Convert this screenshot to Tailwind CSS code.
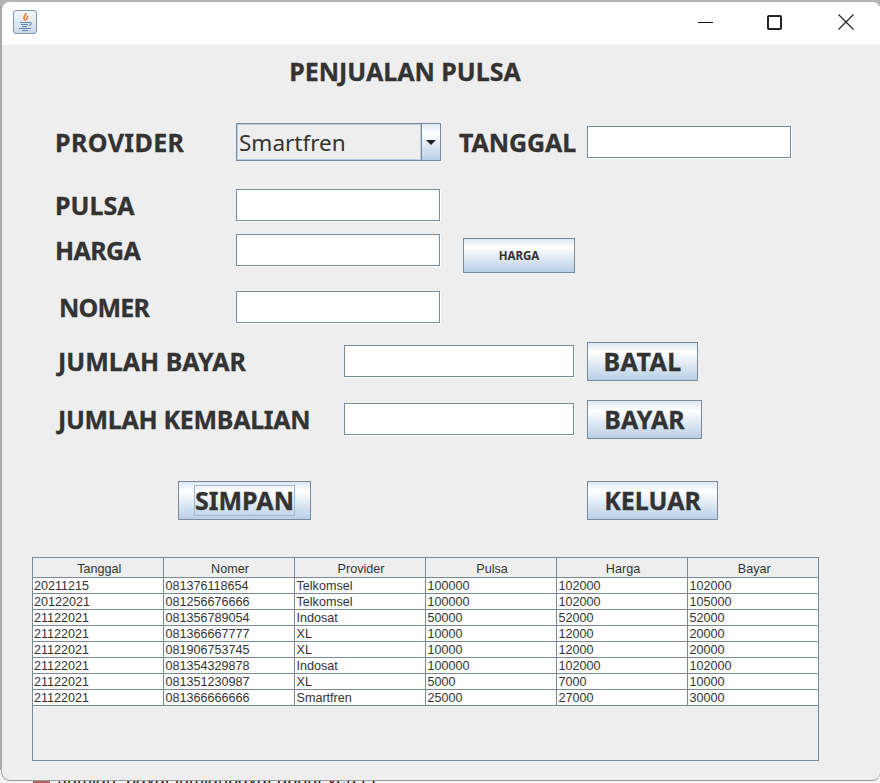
<!DOCTYPE html>
<html>
<head>
<meta charset="utf-8">
<script src="https://cdn.jsdelivr.net/npm/@tailwindcss/browser@4"></script>
</head>
<body class="w-[880px] h-[783px] overflow-hidden bg-[#f3f3f3] relative font-['Noto_Sans',sans-serif] text-[#333333]">
<div class="absolute left-[58px] top-[769px] text-[18px] leading-[20px] text-[#222] whitespace-nowrap font-['Liberation_Sans',sans-serif]">Jumlah_bayar,jumlahbayar,about,yeu,r,F</div>
<div class="absolute left-[33px] top-[778px] w-[17px] h-[5px] bg-[#b0605a]"></div>
<div class="absolute left-0 top-0 w-[2px] h-[770px] bg-[#ababab]"></div>
<div class="absolute inset-x-0 top-0 h-[6px] bg-[#b4b4b4]"></div>
<div class="absolute left-[2px] top-[2px] w-[878px] h-[778px] rounded-[8px] bg-[#eeeeee] overflow-hidden shadow-[0_1px_0_#9a9a9a,-1px_0_0_#a8a8a8]">
  <div class="h-[43px] bg-white flex items-center justify-between pl-[11px] pb-[3px]">
    <div class="w-[24px] h-[24px] rounded-[3px] border border-[#7f97ad] bg-gradient-to-b from-[#f4f7fa] to-[#cbdae8] flex items-center justify-center">
      <svg width="18" height="20" viewBox="0 0 18 20"><path d="M10 1c1 2-3 3-2 5.500 .3 1 1 1.500 1 2.500M12 4c-1 1-2 2-1 4" stroke="#e8792c" stroke-width="1.600" fill="none"/><path d="M4 10.500h9M5 12.500h7M6 14.500h5M13 10.500c3-.5 3 2.500 0 3M3 16.500h12M6 18.500h6" stroke="#5f86ad" stroke-width="1.100" fill="none"/></svg>
    </div>
    <div class="flex items-center">
      <div class="w-[65px] h-[40px] flex items-center justify-center"><div class="w-[15px] h-px bg-[#111]"></div></div>
      <div class="w-[73px] h-[40px] flex items-center justify-center"><div class="w-[15px] h-[15px] border-2 border-[#222] rounded-[2px]"></div></div>
      <div class="w-[69px] h-[40px] flex items-center justify-center"><svg width="16" height="16" viewBox="0 0 16 16"><path d="M.5.500l15 15M15.500.500l-15 15" stroke="#222" stroke-width="1.200" fill="none"/></svg></div>
    </div>
  </div>

  <div class="pl-[53px] text-[25px] leading-[30px] font-bold [-webkit-text-stroke:0.3px_#333333]">
    <div class="w-[700px] -ml-[53px] mt-[11px] h-[30px] flex justify-center pl-[106px]"><span class="whitespace-nowrap">PENJUALAN PULSA</span></div>

    <div class="flex items-center h-[38px] mt-[37px]">
      <span class="w-[181px] whitespace-nowrap tracking-[0.4px]">PROVIDER</span>
      <div class="w-[205px] h-[38px] flex border border-[#7a8a99] bg-[#eeeeee] [-webkit-text-stroke:0]">
        <div class="flex-1 border border-[#b8cfe5] flex items-center pl-[1px] pt-[2px] font-normal text-[22.5px]">Smartfren</div>
        <div class="w-[19px] border-l border-[#7a8a99] bg-linear-to-b from-[#dde8f3] via-white via-25% to-[#b8cfe5] flex items-center justify-center">
          <div class="w-0 h-0 border-x-[5px] border-x-transparent border-t-[5px] border-t-[#222]"></div>
        </div>
      </div>
      <span class="ml-[18px] w-[128px] whitespace-nowrap tracking-[-0.1px]">TANGGAL</span>
      <div class="w-[204px] h-[32px] bg-white border border-[#7a8a99] shadow-[1px_1px_0_#fff]"></div>
    </div>

    <div class="flex items-center h-[32px] mt-[28px]">
      <span class="w-[181px] whitespace-nowrap">PULSA</span>
      <div class="w-[204px] h-[32px] bg-white border border-[#7a8a99] shadow-[1px_1px_0_#fff]"></div>
    </div>

    <div class="flex items-start h-[39px] mt-[13px]">
      <span class="w-[181px] h-[32px] flex items-center whitespace-nowrap tracking-[-0.6px]">HARGA</span>
      <div class="w-[204px] h-[32px] bg-white border border-[#7a8a99] shadow-[1px_1px_0_#fff]"></div>
      <div class="ml-[23px] mt-[4px] w-[112px] h-[35px] border border-[#7a8a99] bg-linear-to-b from-[#dde8f3] via-white via-25% to-[#b8cfe5] flex items-center justify-center text-[11.5px] [-webkit-text-stroke:0]">HARGA</div>
    </div>

    <div class="flex items-center h-[32px] mt-[18px]">
      <span class="w-[181px] pl-[4px] whitespace-nowrap tracking-[-0.8px]">NOMER</span>
      <div class="w-[204px] h-[32px] bg-white border border-[#7a8a99] shadow-[1px_1px_0_#fff]"></div>
    </div>

    <div class="flex items-center h-[39px] mt-[19px]">
      <span class="w-[289px] pl-[3px] pb-[2px] whitespace-nowrap">JUMLAH BAYAR</span>
      <div class="w-[230px] h-[32px] mb-[2px] bg-white border border-[#7a8a99] shadow-[1px_1px_0_#fff]"></div>
      <div class="ml-[13px] w-[111px] h-[39px] border border-[#7a8a99] bg-linear-to-b from-[#dde8f3] via-white via-25% to-[#b8cfe5] flex items-center justify-center tracking-[0.4px] pb-[2px]">BATAL</div>
    </div>

    <div class="flex items-center h-[39px] mt-[19px]">
      <span class="w-[289px] pl-[3px] pb-[2px] whitespace-nowrap tracking-[-0.3px]">JUMLAH KEMBALIAN</span>
      <div class="w-[230px] h-[32px] mb-[2px] bg-white border border-[#7a8a99] shadow-[1px_1px_0_#fff]"></div>
      <div class="ml-[13px] w-[115px] h-[39px] border border-[#7a8a99] bg-linear-to-b from-[#dde8f3] via-white via-25% to-[#b8cfe5] flex items-center justify-center pb-[2px]">BAYAR</div>
    </div>

    <div class="flex items-center h-[39px] mt-[42px]">
      <div class="ml-[123px] w-[133px] h-[39px] border border-[#7a8a99] bg-linear-to-b from-[#dde8f3] via-white via-25% to-[#b8cfe5] flex items-center justify-center">
        <div class="w-[101px] h-[31px] border border-[#a3b8cc] flex items-center justify-center pb-[1px]">SIMPAN</div>
      </div>
      <div class="ml-[276px] w-[131px] h-[39px] border border-[#7a8a99] bg-linear-to-b from-[#dde8f3] via-white via-25% to-[#b8cfe5] flex items-center justify-center pb-[2px]">KELUAR</div>
    </div>
  </div>

  <div class="ml-[30px] mt-[37px] w-[787px] h-[204px] border border-[#7a8a99] font-['Liberation_Sans',sans-serif] text-[12.6px] leading-[14px]">
    <table class="table-fixed border-collapse w-[785px] whitespace-nowrap">
      <thead>
        <tr class="h-[19px] font-normal">
          <th class="w-[130px] pt-[3px] pl-[3px] font-normal text-center border-r border-b border-[#7a8a99]">Tanggal</th>
          <th class="w-[131px] pt-[3px] pl-[3px] font-normal text-center border-r border-b border-[#7a8a99]">Nomer</th>
          <th class="w-[131px] pt-[3px] pl-[3px] font-normal text-center border-r border-b border-[#7a8a99]">Provider</th>
          <th class="w-[131px] pt-[3px] pl-[3px] font-normal text-center border-r border-b border-[#7a8a99]">Pulsa</th>
          <th class="w-[131px] pt-[3px] pl-[3px] font-normal text-center border-r border-b border-[#7a8a99]">Harga</th>
          <th class="w-[131px] pt-[3px] pl-[3px] font-normal text-center border-b border-[#7a8a99]">Bayar</th>
        </tr>
      </thead>
      <tbody class="bg-white [&_td]:h-[16px] [&_td]:p-0 [&_td]:pt-[1px] [&_td]:pl-[2px] [&_td:first-child]:pl-[1px] [&_td]:border-r [&_td]:border-b [&_td]:border-[#7a8a99]">
        <tr><td>20211215</td><td>081376118654</td><td>Telkomsel</td><td>100000</td><td>102000</td><td>102000</td></tr>
        <tr><td>20122021</td><td>081256676666</td><td>Telkomsel</td><td>100000</td><td>102000</td><td>105000</td></tr>
        <tr><td>21122021</td><td>081356789054</td><td>Indosat</td><td>50000</td><td>52000</td><td>52000</td></tr>
        <tr><td>21122021</td><td>081366667777</td><td>XL</td><td>10000</td><td>12000</td><td>20000</td></tr>
        <tr><td>21122021</td><td>081906753745</td><td>XL</td><td>10000</td><td>12000</td><td>20000</td></tr>
        <tr><td>21122021</td><td>081354329878</td><td>Indosat</td><td>100000</td><td>102000</td><td>102000</td></tr>
        <tr><td>21122021</td><td>081351230987</td><td>XL</td><td>5000</td><td>7000</td><td>10000</td></tr>
        <tr><td>21122021</td><td>081366666666</td><td>Smartfren</td><td>25000</td><td>27000</td><td>30000</td></tr>
      </tbody>
    </table>
  </div>
</div>
</body>
</html>
